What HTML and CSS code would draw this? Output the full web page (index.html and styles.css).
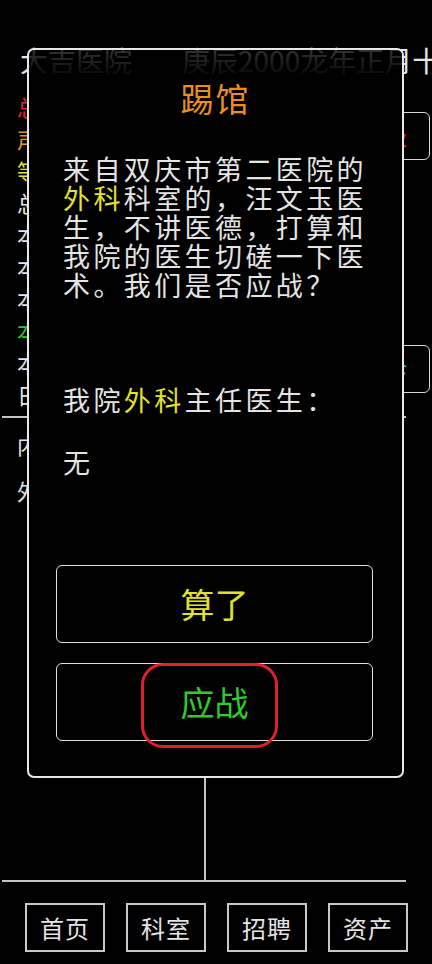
FILE: index.html
```html
<!DOCTYPE html>
<html>
<head>
<meta charset="utf-8">
<title>大吉医院</title>
<link rel="stylesheet" href="styles.css">
</head>
<body>
  <div class="app">
    <div class="header">
      <span class="hospital">大吉医院</span>
      <span class="date">庚辰2000龙年正月十五</span>
    </div>

    <div class="info">
      <div class="stats">
        <div class="red">总资产：128600</div>
        <div class="orange">声望：3260</div>
        <div class="yellow">等级：二级甲等</div>
        <div>总医生数：12</div>
        <div>本月门诊：836</div>
        <div>本月住院：214</div>
        <div>本月手术：58</div>
        <div class="green">本月收入：48200</div>
        <div>本月支出：31600</div>
        <div>日均患者：28</div>
      </div>
      <div class="side">
        <div class="side-btn red">升级</div>
        <div class="side-btn green">出诊</div>
      </div>
    </div>

    <div class="lower">
      <div class="col">
        <div class="dept">内科：3人</div>
        <div class="dept">外科：0人</div>
      </div>
      <div class="col"></div>
    </div>

    <div class="nav">
      <div class="nav-btn">首页</div>
      <div class="nav-btn">科室</div>
      <div class="nav-btn">招聘</div>
      <div class="nav-btn">资产</div>
    </div>
  </div>

  <div class="dialog">
    <div class="dialog-title">踢馆</div>
    <p class="dialog-text">来自双庆市第二医院的<span class="yellow">外科</span>科室的，汪文玉医生，不讲医德，打算和我院的医生切磋一下医术。我们是否应战？</p>
    <p class="dialog-line first">我院<span class="yellow">外科</span>主任医生：</p>
    <p class="dialog-line">无</p>
    <div class="actions">
      <div class="action yellow">算了</div>
      <div class="action green">应战<span class="mark"></span></div>
    </div>
  </div>
</body>
</html>
```

FILE: styles.css
```css
body {
  margin: 0;
  padding: 0;
  background: #000;
  color: #e4e4e4;
  font-family: "Noto Sans CJK SC", "Noto Sans", sans-serif;
  overflow: hidden;
}
.red { color: #e8222a; }
.orange { color: #e8901c; }
.yellow { color: #e2e22a; }
.green { color: #2ccc2c; }

.app {
  width: 432px;
  height: 964px;
  display: flex;
  flex-direction: column;
}
.header {
  height: 90px;
  box-sizing: border-box;
  padding: 45px 0 0 20px;
  font-size: 28px;
  line-height: 30px;
  white-space: nowrap;
  overflow: hidden;
  display: flex;
  gap: 50px;
}

.info {
  height: 326px;
  display: flex;
  justify-content: space-between;
  padding-left: 17px;
}
.stats {
  font-size: 22px;
  line-height: 32px;
  white-space: nowrap;
}
.side {
  padding: 22px 2px 0 0;
  display: flex;
  flex-direction: column;
  gap: 185px;
}
.side-btn {
  width: 90px;
  height: 48px;
  box-sizing: border-box;
  border: 1.5px solid #d8d8d8;
  border-radius: 6px;
  font-size: 22px;
  line-height: 45px;
  text-align: center;
}

.lower {
  height: 466px;
  width: 404px;
  margin-left: 2px;
  box-sizing: border-box;
  border-top: 2px solid #c4c4c4;
  border-bottom: 2px solid #c4c4c4;
  display: grid;
  grid-template-columns: 1fr 1fr;
}
.col + .col {
  border-left: 2px solid #c4c4c4;
}
.dept {
  padding-left: 15px;
  font-size: 22px;
  line-height: 40px;
  margin-top: 6px;
}

.nav {
  display: flex;
  gap: 21px;
  padding: 21px 0 0 25px;
}
.nav-btn {
  width: 80px;
  height: 49px;
  box-sizing: border-box;
  border: 2px solid #c8c8c8;
  font-size: 24px;
  line-height: 45px;
  text-align: center;
  letter-spacing: 1px;
}

.dialog {
  position: absolute;
  left: 27px;
  top: 48px;
  width: 377px;
  height: 730px;
  box-sizing: border-box;
  border: 2px solid #e8e8e8;
  border-radius: 7px;
  background: linear-gradient(to bottom, rgba(0,0,0,0.78) 0, #000 30px);
  display: flex;
  flex-direction: column;
}
.dialog-title {
  margin-top: 28px;
  text-align: center;
  font-size: 33px;
  line-height: 40px;
  color: #e8901c;
  letter-spacing: 2px;
}
.dialog-text,
.dialog-line {
  margin: 0;
  padding: 0 22px 0 34px;
  font-size: 27px;
  line-height: 29px;
  letter-spacing: 3.4px;
}
.dialog-text {
  margin-top: 36px;
}
.dialog-line.first {
  margin-top: 86px;
}
.dialog-line + .dialog-line {
  margin-top: 33px;
}
.actions {
  margin-top: auto;
  padding: 0 29px 35px 27px;
  display: flex;
  flex-direction: column;
  gap: 20px;
}
.action {
  position: relative;
  height: 78px;
  box-sizing: border-box;
  border: 1.5px solid #e0e0e0;
  border-radius: 6px;
  font-size: 34px;
  line-height: 75px;
  text-align: center;
}
.mark {
  position: absolute;
  left: 84px;
  top: -1px;
  width: 137px;
  height: 85px;
  box-sizing: border-box;
  border: 3.5px solid #e0202a;
  border-radius: 22px;
}
```
